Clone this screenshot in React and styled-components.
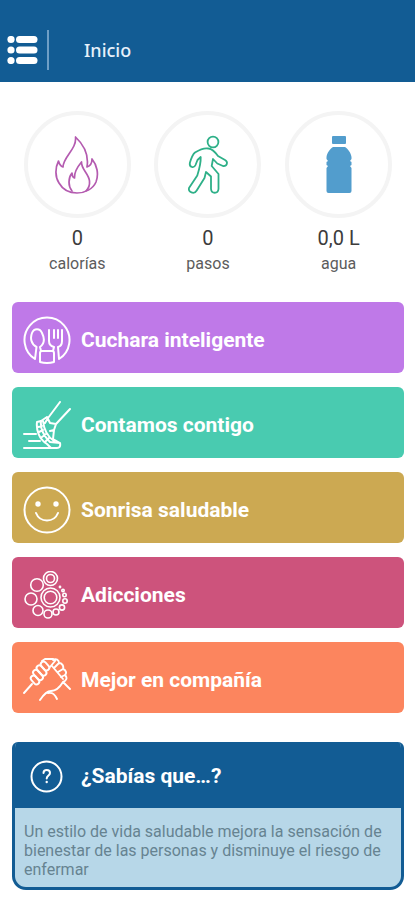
import React from "react";
import styled, { createGlobalStyle } from "styled-components";

const GlobalStyle = createGlobalStyle`
  *, *::before, *::after { box-sizing: border-box; }
  body { margin: 0; background: #fff; font-family: Roboto, "Liberation Sans", sans-serif; }
  h1, h2, p, ul { margin: 0; padding: 0; }
`;

const Header = styled.header`
  display: flex;
  align-items: center;
  height: 82px;
  padding: 18px 7px 0;
  background: #125c94;
  color: #fff;
`;

const MenuButton = styled.button`
  display: flex;
  padding: 0;
  border: 0;
  background: none;
  color: inherit;
  cursor: pointer;
`;

const Divider = styled.span`
  width: 2px;
  height: 40px;
  margin: 0 35px 0 9px;
  background: #6f9fc6;
`;

const Title = styled.h1`
  font: 500 18px/24px "Noto Sans", sans-serif;
  color: #e6f1fb;
`;

const Main = styled.main`
  padding: 29px 11px 10px 12px;
`;

const Stats = styled.ul`
  display: grid;
  grid-template-columns: repeat(3, 1fr);
  list-style: none;
`;

const Stat = styled.li`
  display: flex;
  flex-direction: column;
  align-items: center;
`;

const Ring = styled.div`
  display: flex;
  align-items: center;
  justify-content: center;
  width: 107px;
  height: 107px;
  border: 4px solid #f4f4f4;
  border-radius: 50%;
  color: ${(p) => p.$color};
`;

const Value = styled.span`
  margin-top: 8px;
  font-size: 20px;
  line-height: 24px;
  color: #3c3c3c;
`;

const Label = styled.span`
  margin-top: 3px;
  font-size: 16px;
  line-height: 22px;
  color: #5c5c5c;
`;

const Menu = styled.nav`
  display: flex;
  flex-direction: column;
  gap: 14px;
  margin-top: 27px;
`;

const MenuItem = styled.a`
  display: flex;
  align-items: center;
  gap: 10px;
  height: 71px;
  padding: 5px 11px 0;
  border-radius: 6px;
  background: ${(p) => p.$color};
  color: #fff;
  font-size: 21px;
  font-weight: 700;
  text-decoration: none;
`;

const Tip = styled.section`
  margin-top: 29px;
  border: 3px solid #125c94;
  border-top-width: 0;
  border-radius: 6px 6px 14px 14px;
  background: #b7d7e8;
  overflow: hidden;
`;

const TipHeader = styled.div`
  display: flex;
  align-items: center;
  gap: 18px;
  height: 66px;
  padding: 2px 15px 0;
  background: #125c94;
  color: #fff;
`;

const TipTitle = styled.h2`
  font-size: 21px;
  line-height: 24px;
`;

const TipText = styled.p`
  padding: 14px 9px 8px;
  font-size: 16px;
  line-height: 19px;
  color: #668391;
`;

function Icon({ size = 48, width = size, height = size, stroke = 2, children }) {
  return (
    <svg
      width={width}
      height={height}
      viewBox={`0 0 ${width} ${height}`}
      fill="none"
      stroke="currentColor"
      strokeWidth={stroke}
      strokeLinecap="round"
      strokeLinejoin="round"
      aria-hidden="true"
    >
      {children}
    </svg>
  );
}

const ListIcon = () => (
  <Icon width={31} height={28} stroke={0}>
    <g fill="currentColor">
      {[0, 10.5, 21].map((y) => (
        <g key={y}>
          <circle cx="4" cy={y + 3.5} r="3.6" />
          <rect x="9" y={y} width="21.5" height="7" rx="3.5" />
        </g>
      ))}
    </g>
  </Icon>
);

const FlameIcon = () => (
  <Icon width={44} height={60} stroke={1.7}>
    <path d="M20.500 2C22 14 8 22 8 32C5 31 4 28 3.500 26C0 33 0 42 4 48C8 55 15 58 22 58C30 58 38 54 41 47C44 39 42 30 37 24C37 28 35 31 32 32C34 20 29 10 20.500 2Z" />
    <path d="M26.500 27C24 30 19 37 19.500 43C17 42 17 40 17 38C13 43 13 51 17 56M26.500 27C26 34 34 39 34.500 46C35 51 33 54 31 56" />
  </Icon>
);

const WalkIcon = () => (
  <Icon width={42} height={60} stroke={1.8}>
    <circle cx="26" cy="7" r="5.400" />
    <path d="M21.500 13.500C17 12.500 12 15 8 17.500C5.500 19.500 4 24 2.800 28C2.200 32.500 7 33.500 8.500 30L10.500 25L13.700 22C14 28 12 35 10.300 40.500L2 53C1 57 7 60 9.700 55.500L17.500 43L19 37L24 41.500V54C24.500 59 31 59 31.500 54V39L24.700 31L26 24L30.300 28.500L36 31C40 31.500 41.500 27 38 25L31 21C28.500 17.500 26 14 21.500 13.500Z" />
  </Icon>
);

const BottleIcon = () => (
  <Icon width={28} height={60} stroke={0}>
    <g fill="currentColor">
      <rect x="7" y="1" width="14" height="8" rx="1" />
      <path d="M8 12H20C23 14 26 18 26.500 22V24L25 26L26.500 27V30L25 31L26.500 33V56Q26.500 58 24.500 58H3.500Q1.500 58 1.500 56V33L3 31L1.500 30V27L3 26L1.500 24V22C2 18 5 14 8 12Z" />
    </g>
  </Icon>
);

const CutleryIcon = () => (
  <Icon>
    <path d="M12 43A22.500 22.500 0 1 1 36 43M12 43L13.500 31C8 28 7 22 9 17C11 12 17 12 19 17C22 23 21 28 17 31L18 35M17 46V37Q17 35 19 35H29Q31 35 31 37V46Q24 48 17 46ZM30 35L31 31C27 30 26 28 26 25V14M31 14V22M35 14V22M39 14V25Q39 30 35 31L36 43" />
  </Icon>
);

const RunIcon = () => (
  <Icon>
    <path d="M37 1L25 17M47 8L33 23M1 33H13M6 40H17M1 47H34Q38 47 37 42L30 38L31 29L33 23L27 22L24 16L18 20L14 21C13 29 16 38 24 43L28 47M18 20C17 28 21 35 27 41L37 42M20 20C21 29 25 36 31 40M15 26L19 25M16 31L20 29M19 36L23 33M23 40L26 37M25 17L22 22M31 29L27 30" />
  </Icon>
);

const SmileIcon = () => (
  <Icon>
    <circle cx="24" cy="24" r="22.500" />
    <path d="M13 27C17 37 31 37 35 27" />
    <g fill="currentColor" stroke="none">
      <circle cx="15" cy="18" r="2.700" />
      <circle cx="33" cy="18" r="2.700" />
    </g>
  </Icon>
);

const CirclesIcon = () => (
  <Icon stroke={1.600}>
    <circle cx="27.500" cy="7.500" r="7" />
    <circle cx="27.500" cy="7.500" r="4" />
    <circle cx="14" cy="14" r="6.300" />
    <circle cx="8" cy="28" r="6" />
    <circle cx="15" cy="39.500" r="5" />
    <circle cx="25" cy="43" r="4" />
    <circle cx="33" cy="41" r="3" />
    <circle cx="39" cy="36.500" r="2.600" />
    <circle cx="42" cy="30" r="2.200" />
    <circle cx="41.500" cy="24" r="1.700" />
    <circle cx="40" cy="19.500" r="1.200" />
    <circle cx="37" cy="16" r=".6" />
    <circle cx="27.500" cy="26.500" r="9.500" />
    <circle cx="27.500" cy="26.500" r="6.300" />
  </Icon>
);

const HandsIcon = () => (
  <Icon stroke={1.900}>
    <path d="M1 37L9 28" />
    <rect x="-5" y="-2.700" width="10" height="5.400" rx="2.700" transform="translate(12 24) rotate(48)" />
    <rect x="-6" y="-2.700" width="12" height="5.400" rx="2.700" transform="translate(15 19) rotate(48)" />
    <rect x="-6" y="-2.700" width="12" height="5.400" rx="2.700" transform="translate(18.500 14.500) rotate(48)" />
    <rect x="-5" y="-2.700" width="10" height="5.400" rx="2.700" transform="translate(22 10) rotate(48)" />
    <path d="M19 5L22 3H30L32 5L27 11M30 4C33 2 36 4 36 7C39 7 41 10 40 13C43 14 44 17 42 19C45 22 43 25 40 26C37 31 33 35 28 35C24 35 21 38 17 44M36 7L32 11M40 13L35 16M42 19L38 21M29 10L40 23M25 37C30 36 32 39 34 43M40 26L47 33" />
  </Icon>
);

const QuestionIcon = () => (
  <Icon size={33}>
    <circle cx="16.500" cy="16.500" r="15" />
    <path d="M13.500 13C13.500 9 20 9 20 13C20 15.500 16.700 15.500 16.700 18.500" />
    <circle cx="16.700" cy="22" r="1.200" fill="currentColor" stroke="none" />
  </Icon>
);

const stats = [
  { label: "calorías", value: "0", color: "#b45bb0", icon: FlameIcon },
  { label: "pasos", value: "0", color: "#2eb088", icon: WalkIcon },
  { label: "agua", value: "0,0 L", color: "#529dcd", icon: BottleIcon },
];

const sections = [
  { id: "cuchara", label: "Cuchara inteligente", color: "#bf79e8", icon: CutleryIcon },
  { id: "contamos", label: "Contamos contigo", color: "#49cbb0", icon: RunIcon },
  { id: "sonrisa", label: "Sonrisa saludable", color: "#cca952", icon: SmileIcon },
  { id: "adicciones", label: "Adicciones", color: "#cd537c", icon: CirclesIcon },
  { id: "compania", label: "Mejor en compañía", color: "#fc855e", icon: HandsIcon },
];

export default function App() {
  return (
    <>
      <GlobalStyle />
      <Header>
        <MenuButton type="button" aria-label="Menú">
          <ListIcon />
        </MenuButton>
        <Divider />
        <Title>Inicio</Title>
      </Header>
      <Main>
        <Stats>
          {stats.map(({ label, value, color, icon: StatIcon }) => (
            <Stat key={label}>
              <Ring $color={color}>
                <StatIcon />
              </Ring>
              <Value>{value}</Value>
              <Label>{label}</Label>
            </Stat>
          ))}
        </Stats>
        <Menu>
          {sections.map(({ id, label, color, icon: SectionIcon }) => (
            <MenuItem key={id} href={`#${id}`} $color={color}>
              <SectionIcon />
              {label}
            </MenuItem>
          ))}
        </Menu>
        <Tip>
          <TipHeader>
            <QuestionIcon />
            <TipTitle>¿Sabías que…?</TipTitle>
          </TipHeader>
          <TipText>
            Un estilo de vida saludable mejora la sensación de bienestar de las
            personas y disminuye el riesgo de enfermar
          </TipText>
        </Tip>
      </Main>
    </>
  );
}
